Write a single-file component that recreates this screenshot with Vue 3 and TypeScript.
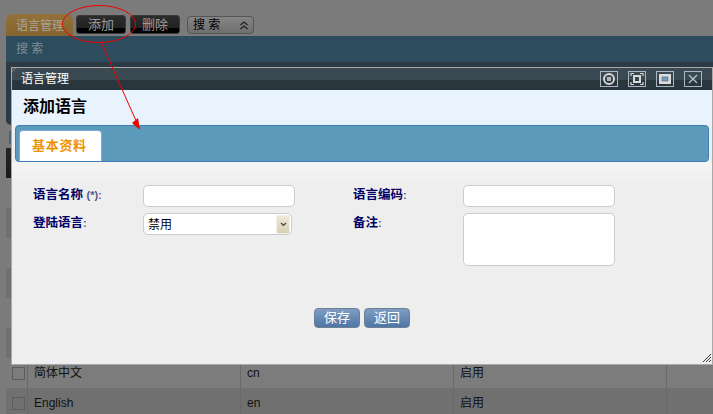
<script setup lang="ts">
interface Row { name: string; code: string; state: string }
const rows: Row[] = [
  { name: '', code: '', state: '' },
  { name: '', code: '', state: '' },
  { name: '', code: '', state: '' },
  { name: '', code: '', state: '' },
  { name: '', code: '', state: '' },
  { name: '', code: '', state: '' },
  { name: '简体中文', code: 'cn', state: '启用' },
  { name: 'English', code: 'en', state: '启用' },
]
</script>

<template>
  <div class="page">
    <div class="toolbar">
      <div class="module-tab">语言管理</div>
      <button class="tool-btn first">添加</button>
      <button class="tool-btn">删除</button>
      <div class="search-toggle">
        <span>搜 索</span>
        <svg width="10" height="9" viewBox="0 0 10 9">
          <path d="M1.5 4 5 1 8.500 4M1.500 8 5 5 8.500 8" fill="none" stroke="#222" stroke-width="1.300" />
        </svg>
      </div>
    </div>
    <div class="search-bar">搜 索</div>
    <div class="search-body"></div>
    <div class="list-tab"></div>
    <div class="table-head"></div>
    <div class="table-body">
      <div v-for="(row, i) in rows" :key="i" class="row" :class="{ alt: i % 2 === 1 }">
        <div class="cell check"><span class="box"></span></div>
        <div class="cell">{{ row.name }}</div>
        <div class="cell">{{ row.code }}</div>
        <div class="cell">{{ row.state }}</div>
        <div class="cell"></div>
      </div>
    </div>

    <section class="dialog">
      <header class="dialog-title">
        <span class="corner"></span>
        <span class="dialog-name">语言管理</span>
        <div class="win-btns">
          <span class="win-btn">
            <svg width="16" height="14" viewBox="0 0 16 14"><circle cx="8" cy="7" r="5" fill="none" stroke="#d4d4d4" stroke-width="2" /><rect x="6" y="5" width="4" height="4" fill="#b4b4b4" /></svg>
          </span>
          <span class="win-btn">
            <svg width="16" height="14" viewBox="0 0 16 14"><rect x="5" y="4" width="6" height="6" fill="none" stroke="#d8d8d8" stroke-width="2" /><path d="M2 4V1.500H5M11 1.500H14V4M14 10V12.500H11M5 12.500H2V10" fill="none" stroke="#d8d8d8" stroke-width="1.200" /></svg>
          </span>
          <span class="win-btn">
            <svg width="16" height="14" viewBox="0 0 16 14"><rect x="2" y="2" width="12" height="10" fill="#dcdcdc" /><rect x="5" y="5" width="6" height="4" fill="#6fa3cc" stroke="#445" stroke-width=".5" /></svg>
          </span>
          <span class="win-btn">
            <svg width="16" height="14" viewBox="0 0 16 14"><path d="M4 3 12 11M12 3 4 11" fill="none" stroke="#b8c4d0" stroke-width="1.200" /></svg>
          </span>
        </div>
      </header>
      <h1 class="dialog-heading">添加语言</h1>
      <div class="tabs">
        <div class="tab">基本资料</div>
      </div>
      <div class="content">
        <form class="form" @submit.prevent>
          <label class="label">语言名称 <em>(*):</em></label>
          <input class="field" type="text" />
          <label class="label">语言编码<em>:</em></label>
          <input class="field" type="text" />
          <label class="label">登陆语言<em>:</em></label>
          <div class="select">
            <span class="select-value">禁用</span>
            <span class="select-arrow">
              <svg width="7" height="5" viewBox="0 0 7 5"><path d="M1 1 3.500 3.500 6 1" fill="none" stroke="#444" stroke-width="1.200" /></svg>
            </span>
          </div>
          <label class="label">备注<em>:</em></label>
          <textarea class="field area"></textarea>
        </form>
        <div class="actions">
          <button class="action">保存</button>
          <button class="action">返回</button>
        </div>
        <svg class="grip" width="10" height="10" viewBox="0 0 10 10">
          <path d="M1 9 9 1M4 9 9 4M7 9 9 7" stroke="#333" stroke-width="1" fill="none" />
        </svg>
      </div>
    </section>

    <svg class="annotation" width="713" height="414" viewBox="0 0 713 414">
      <ellipse cx="99" cy="24" rx="36.500" ry="18.500" fill="none" stroke="#f00000" stroke-width="1" />
      <path d="M101 42 137 123" fill="none" stroke="#f00000" stroke-width="1" />
      <path d="M140 130 132 123 138 118Z" fill="#f00000" />
    </svg>
  </div>
</template>

<style>
html, body { margin: 0; background: #7b7b7b; }
</style>

<style scoped>
.page {
  position: relative;
  width: 713px;
  height: 414px;
  overflow: hidden;
  box-sizing: border-box;
  padding: 14px 0 0 6px;
  background: #7b7b7b;
  font-family: "Liberation Sans", "Noto Sans CJK SC", sans-serif;
  font-size: 12px;
  color: #111;
}
.toolbar { display: flex; align-items: flex-start; height: 22px; }
.module-tab {
  width: 67px;
  height: 22px;
  box-sizing: border-box;
  padding: 4px 0 0 10px;
  border-radius: 6px 6px 0 0;
  background: linear-gradient(#94713a, #85642f);
  color: #a9a49a;
  line-height: 16px;
}
.tool-btn {
  width: 50px;
  height: 19px;
  margin: 1px 0 0 4px;
  padding: 0;
  border: 1px solid #3a3a3a;
  border-radius: 3px;
  background: linear-gradient(#2c2c2c 0, #222 70%, #000 71%, #000 100%);
  color: #9a9a9a;
  font: 13px/16px "Liberation Sans", "Noto Sans CJK SC", sans-serif;
}
.tool-btn.first { margin-left: 3px; }
.search-toggle {
  display: flex;
  align-items: center;
  justify-content: space-between;
  box-sizing: border-box;
  width: 67px;
  height: 18px;
  margin: 2px 0 0 7px;
  padding: 0 4px 0 5px;
  border: 1px solid #555;
  border-radius: 4px;
  background: linear-gradient(#858585, #6f6f6f);
  color: #000;
  line-height: 16px;
}
.search-bar {
  height: 26px;
  box-sizing: border-box;
  padding-left: 10px;
  background: #2d4d5f;
  color: #7f8d95;
  line-height: 27px;
}
.search-body { height: 63px; background: #2b3a44; border-radius: 0 0 0 5px; }
.list-tab { width: 2px; height: 13px; margin: 6px 0 0 3px; background: #47667a; }
.table-head {
  width: 60px;
  height: 30px;
  margin-top: 4px;
  background: linear-gradient(#262626, #1a1a1a);
}
.row {
  display: grid;
  grid-template-columns: 21px 213px 213px 213px 47px;
  height: 30px;
  background: #7c7c7c;
}
.row.alt { background: #707070; }
.cell {
  box-sizing: border-box;
  padding-left: 6px;
  border-left: 1px solid #686868;
  line-height: 30px;
  color: #111;
}
.cell.check { padding: 0; border-left: 0; display: flex; align-items: center; justify-content: flex-end; }
.box { width: 13px; height: 13px; margin-right: 2px; border: 1px solid #5c5c5c; box-sizing: border-box; }

.dialog {
  position: absolute;
  left: 11px;
  top: 67px;
  width: 702px;
  height: 298px;
  box-sizing: border-box;
  display: flex;
  flex-direction: column;
  border: 1px solid #a9a9a9;
  background: #eee;
}
.dialog-title {
  position: relative;
  display: flex;
  align-items: center;
  justify-content: space-between;
  height: 22px;
  flex: none;
  box-sizing: border-box;
  padding: 0 10px 0 9px;
  background: linear-gradient(#3b4a52 0, #3b4a52 55%, #2a363e 56%, #2a363e 100%);
  color: #fff;
  font-size: 12px;
}
.dialog-name { margin-top: -4px; }
.corner {
  position: absolute;
  left: 0;
  top: 0;
  width: 6px;
  height: 6px;
  background: repeating-linear-gradient(135deg, #777 0 1px, #333 1px 2px);
  clip-path: polygon(0 0, 100% 0, 0 100%);
}
.win-btns { display: flex; gap: 10px; }
.win-btn {
  display: flex;
  align-items: center;
  justify-content: center;
  width: 18px;
  height: 16px;
  box-sizing: border-box;
  border: 1px solid #aab6c4;
}
.dialog-heading {
  flex: none;
  height: 35px;
  margin: 0;
  padding-left: 11px;
  background: #e9f3fe;
  color: #000;
  font-size: 16px;
  font-weight: 700;
  line-height: 33px;
}
.tabs {
  flex: none;
  height: 37px;
  margin: 0 3px 0 3px;
  box-sizing: border-box;
  display: flex;
  align-items: flex-end;
  padding-left: 3px;
  border: 1px solid #3f7fb8;
  border-radius: 4px;
  background: #5b9aba;
}
.tab {
  width: 83px;
  height: 31px;
  box-sizing: border-box;
  padding-left: 12px;
  border: 1px solid #7aa8dc;
  border-bottom: 0;
  border-radius: 4px 4px 0 0;
  background: #fff;
  color: #ef9200;
  font-size: 13px;
  font-weight: 700;
  letter-spacing: .7px;
  line-height: 30px;
}
.content {
  position: relative;
  flex: 1;
  box-sizing: border-box;
  padding: 23px 0 0 21px;
  background: linear-gradient(#f5f5f5 0, #eee 24px);
}
.form {
  display: grid;
  grid-template-columns: 110px 210px 110px 152px;
  grid-template-rows: 22px 53px;
  row-gap: 6px;
  align-items: start;
}
.label {
  color: #000066;
  font-size: 12.500px;
  font-weight: 700;
  line-height: 20px;
  white-space: nowrap;
}
.label em { font-style: normal; font-size: 11px; color: #55558f; }
.field {
  width: 152px;
  height: 22px;
  box-sizing: border-box;
  margin: 0;
  border: 1px solid #ccc;
  border-radius: 5px;
  background: #fff;
  outline: 0;
  resize: none;
}
.field.area { height: 53px; }
.select {
  display: flex;
  justify-content: space-between;
  align-items: center;
  width: 149px;
  height: 22px;
  box-sizing: border-box;
  padding: 0 1px 0 4px;
  border: 1px solid #ccc;
  border-radius: 5px;
  background: #fff;
  color: #000;
  font-size: 12px;
}
.select-value { margin-top: -2px; }
.select-arrow {
  display: flex;
  align-items: center;
  justify-content: center;
  width: 14px;
  height: 19px;
  border: 1px solid #f5f0e4;
  border-radius: 2px;
  box-sizing: border-box;
  background: linear-gradient(#efe9d8, #d8ceb4);
}
.actions {
  display: flex;
  justify-content: center;
  gap: 4px;
  margin: 42px 0 0 -21px;
}
.action {
  width: 46px;
  height: 20px;
  padding: 0;
  border: 1px solid #6f7f93;
  border-radius: 4px;
  background: linear-gradient(#7f9dc2, #4f76a6);
  color: #fff;
  font: 13px/18px "Liberation Sans", "Noto Sans CJK SC", sans-serif;
}
.grip { position: absolute; right: 0; bottom: 1px; }
.annotation { position: absolute; left: 0; top: 0; pointer-events: none; }
</style>
